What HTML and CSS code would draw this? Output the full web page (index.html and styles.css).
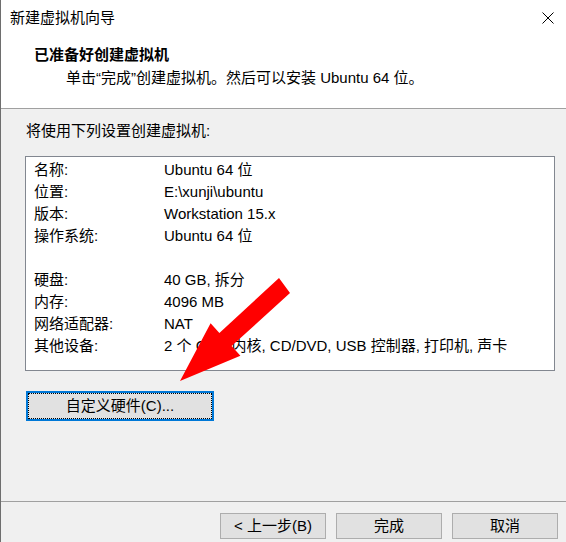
FILE: index.html
```html
<!DOCTYPE html>
<html lang="zh-CN">
<head>
<meta charset="utf-8">
<title>新建虚拟机向导</title>
<link rel="stylesheet" href="styles.css">
</head>
<body>
<div class="window">
  <div class="top">
    <div class="titlebar">
      <span class="title">新建虚拟机向导</span>
      <svg class="close" width="12" height="12" viewBox="0 0 12 12"><path d="M0.5 0.5 L11.5 11.5 M11.5 0.5 L0.5 11.5" stroke="#000" stroke-width="1" fill="none"/></svg>
    </div>
    <div class="header">
      <div class="h-title">已准备好创建虚拟机</div>
      <div class="h-sub">单击“完成”创建虚拟机。然后可以安装 Ubuntu 64 位。</div>
    </div>
  </div>
  <div class="content">
    <div class="intro">将使用下列设置创建虚拟机:</div>
    <div class="listbox">
      <div class="row"><span class="k">名称:</span><span class="v">Ubuntu 64 位</span></div>
      <div class="row"><span class="k">位置:</span><span class="v">E:\xunji\ubuntu</span></div>
      <div class="row"><span class="k">版本:</span><span class="v">Workstation 15.x</span></div>
      <div class="row"><span class="k">操作系统:</span><span class="v">Ubuntu 64 位</span></div>
      <div class="row"></div>
      <div class="row"><span class="k">硬盘:</span><span class="v">40 GB, 拆分</span></div>
      <div class="row"><span class="k">内存:</span><span class="v">4096 MB</span></div>
      <div class="row"><span class="k">网络适配器:</span><span class="v">NAT</span></div>
      <div class="row"><span class="k">其他设备:</span><span class="v">2 个 CPU 内核, CD/DVD, USB 控制器, 打印机, 声卡</span></div>
    </div>
    <button class="custom"><span class="focus">自定义硬件(C)...</span></button>
  </div>
  <div class="footer">
    <button class="btn">&lt; 上一步(B)</button>
    <button class="btn">完成</button>
    <button class="btn">取消</button>
  </div>
  <svg class="arrow" width="566" height="542" viewBox="0 0 566 542">
    <polygon points="279,278 290,293 231.6,346.1 240.4,355.7 180,381 210.6,323.3 219.4,332.9" fill="#ff0000"/>
  </svg>
</div>
</body>
</html>
```

FILE: styles.css
```css
html, body {
  margin: 0;
  padding: 0;
}
body {
  width: 566px;
  height: 542px;
  overflow: hidden;
  background: #f0f0f0;
  font-family: "Liberation Sans", "Noto Sans CJK SC", sans-serif;
  font-size: 15px;
  color: #000;
}
.window {
  position: relative;
  width: 566px;
  height: 542px;
  box-sizing: border-box;
  border-left: 1px solid #6e6e6e;
  display: flex;
  flex-direction: column;
}
.top {
  background: #fff;
  height: 109px;
  box-sizing: border-box;
  border-bottom: 1px solid #a0a0a0;
}
.titlebar {
  height: 36px;
  display: flex;
  align-items: center;
  justify-content: space-between;
  padding: 0 12px 0 9px;
}
.title {
  line-height: 20px;
}
.close {
  display: block;
}
.header {
  padding: 9px 0 0 33px;
}
.h-title {
  font-weight: bold;
  line-height: 20px;
}
.h-sub {
  margin-top: 3px;
  padding-left: 32px;
  line-height: 20px;
}
.content {
  height: 392px;
  box-sizing: border-box;
  padding: 12px 11px 0 24px;
}
.intro {
  margin-left: 1px;
  line-height: 20px;
}
.listbox {
  margin-top: 15px;
  height: 215px;
  box-sizing: border-box;
  background: #fff;
  border: 1px solid #828790;
  padding: 2px 0 0 8px;
}
.row {
  height: 22px;
  line-height: 22px;
  display: flex;
  white-space: nowrap;
}
.k {
  width: 130px;
  flex: none;
}
.custom {
  margin: 20px 0 0 1px;
  width: 188px;
  height: 30px;
  padding: 0;
  box-sizing: border-box;
  border: 2px solid #0078d7;
  background: #e1e1e1;
  font: inherit;
  color: #000;
  display: flex;
}
.focus {
  flex: 1;
  border: 1px dotted #000;
  display: flex;
  align-items: center;
  justify-content: center;
  line-height: 20px;
}
.footer {
  border-top: 1px solid #a0a0a0;
  flex: 1;
  display: flex;
  justify-content: flex-end;
  align-items: flex-start;
  gap: 10px;
  padding: 11px 8px 0 0;
}
.btn {
  width: 106px;
  height: 26px;
  box-sizing: border-box;
  border: 1px solid #adadad;
  background: #e1e1e1;
  font: inherit;
  color: #000;
  padding: 0;
  line-height: 22px;
}
.arrow {
  position: absolute;
  left: -1px;
  top: 0;
  pointer-events: none;
}
```
